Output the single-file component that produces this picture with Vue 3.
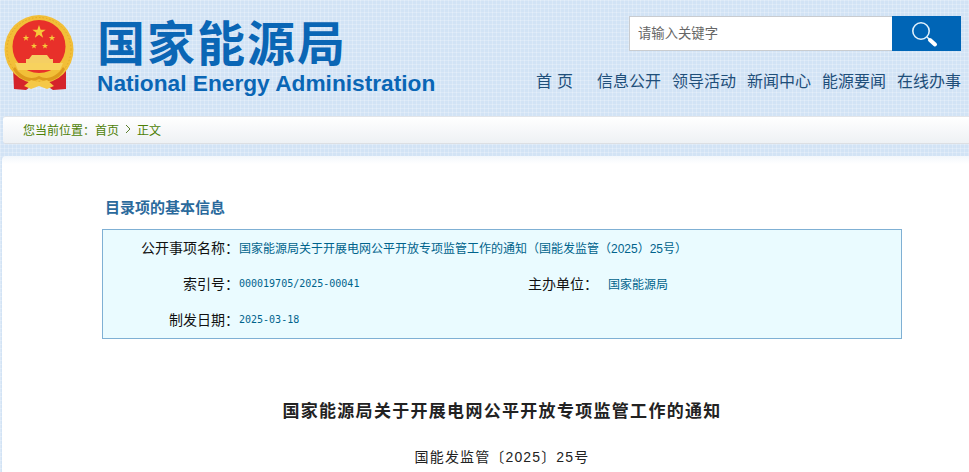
<script setup>
const navItems = ['信息公开', '领导活动', '新闻中心', '能源要闻', '在线办事']
const star = (cx, cy, r) => {
  const pts = []
  for (let i = 0; i < 10; i++) {
    const rad = i % 2 ? r * 0.4 : r
    const a = -Math.PI / 2 + (i * Math.PI) / 5
    pts.push((cx + rad * Math.cos(a)).toFixed(2) + ',' + (cy + rad * Math.sin(a)).toFixed(2))
  }
  return pts.join(' ')
}
const stars = [
  [39, 32, 7],
  [26, 38, 3.4],
  [52, 38, 3.4],
  [34, 46, 3.2],
  [45, 46, 3.2]
]
</script>

<template>
  <div class="page">
    <header class="top">
      <div class="brand">
        <svg class="emblem" width="80" height="96" viewBox="0 0 80 96" aria-hidden="true">
          <path d="M13 68 L14 89 L26 90 L40 80 L28 70 Z" fill="#d5232a" />
          <path d="M66 68 L66 89 L53 90 L38 80 L50 70 Z" fill="#d5232a" />
          <circle cx="39" cy="49.5" r="34.5" fill="#f2bf38" />
          <circle cx="39" cy="49.5" r="32" fill="none" stroke="#e3a826" stroke-width="1" stroke-dasharray="1.5 2" />
          <circle cx="39" cy="46.5" r="26.5" fill="#e8302a" />
          <polygon v-for="(s, i) in stars" :key="i" :points="star(s[0], s[1], s[2])" fill="#f7c93a" />
          <path d="M32 55 H47 L50 59 H53 V63 H26 V59 H29 Z" fill="#f5cf63" />
          <path d="M15 63 H63 L60 70 H18 Z" fill="#f7d25e" />
          <path d="M15 67 C22 78 32 80 39 76 C46 80 56 78 63 67 L65 69 C58 82 46 83 39 79 C32 83 20 82 13 69 Z" fill="#dd9a1d" />
          <path d="M24 86 L31 80 L39 82 L47 80 L54 86 L47 89 L39 86 L31 89 Z" fill="#f5c846" />
        </svg>
        <div class="wordmark">
          <div class="cn">国家能源局</div>
          <div class="en">National Energy Administration</div>
        </div>
      </div>
      <div class="tools">
        <div class="search">
          <div class="field">请输入关键字</div>
          <div class="go">
            <svg width="30" height="30" viewBox="0 0 30 30" aria-hidden="true">
              <circle cx="9" cy="12" r="8.2" fill="none" stroke="#dff0fb" stroke-width="1.6" />
              <path d="M15 18 L18 21" stroke="#dff0fb" stroke-width="1.6" />
              <path d="M18 21 L23 25.5" stroke="#fff" stroke-width="4" stroke-linecap="round" />
            </svg>
          </div>
        </div>
        <nav class="nav">
          <a class="home">首 页</a>
          <a v-for="n in navItems" :key="n">{{ n }}</a>
        </nav>
      </div>
    </header>

    <div class="crumb">
      <span>您当前位置：首页</span>
      <svg class="chev" width="6" height="10" viewBox="0 0 6 10" aria-hidden="true">
        <path d="M1 1 L5 5 L1 9" fill="none" stroke="#5b7f2c" stroke-width="1" />
      </svg>
      <span>正文</span>
    </div>

    <main class="sheet">
      <h2 class="section">目录项的基本信息</h2>
      <div class="info">
        <div class="row">
          <span class="label">公开事项名称：</span>
          <span class="value">国家能源局关于开展电网公平开放专项监管工作的通知（国能发监管（2025）25号）</span>
        </div>
        <div class="row">
          <span class="label">索引号：</span>
          <span class="value mono idx">000019705/2025-00041</span>
          <span class="label second">主办单位：</span>
          <span class="value org">国家能源局</span>
        </div>
        <div class="row">
          <span class="label">制发日期：</span>
          <span class="value mono">2025-03-18</span>
        </div>
      </div>
      <h1 class="title">国家能源局关于开展电网公平开放专项监管工作的通知</h1>
      <p class="docno">国能发监管〔2025〕25号</p>
    </main>
  </div>
</template>

<style>
html, body { margin: 0; background: #d3e4f5; }
</style>

<style scoped>
.page {
  width: 969px;
  height: 472px;
  overflow: hidden;
  font-family: "Liberation Sans", "Noto Sans CJK SC", sans-serif;
  background-color: #d2e3f5;
  background-image:
    linear-gradient(rgba(255, 255, 255, 0.22) 1px, transparent 1px),
    linear-gradient(90deg, rgba(255, 255, 255, 0.22) 1px, transparent 1px);
  background-size: 4px 4px;
}
.top {
  height: 116px;
  display: flex;
  justify-content: space-between;
  box-sizing: border-box;
  padding-right: 8px;
}
.brand { display: flex; }
.emblem { flex: none; margin-right: 17px; }
.wordmark { padding-top: 16px; }
.cn {
  font-size: 48px;
  line-height: 57px;
  letter-spacing: 2px;
  font-weight: 700;
  color: #0a66b5;
}
.en {
  font-size: 22.7px;
  line-height: 20px;
  font-weight: 700;
  color: #0a66b5;
  white-space: nowrap;
}
.tools {
  display: flex;
  flex-direction: column;
  align-items: flex-end;
  padding-top: 16px;
}
.search { display: flex; height: 35px; }
.field {
  width: 263px;
  box-sizing: border-box;
  background: #fff;
  border: 1px solid #c9ccd0;
  border-right: none;
  padding-left: 8px;
  font-size: 13.33px;
  line-height: 33px;
  color: #666;
}
.go {
  width: 69px;
  background: #0065b6;
  display: flex;
  align-items: center;
  justify-content: center;
}
.nav {
  display: flex;
  gap: 11px;
  margin-top: 20px;
  font-size: 16px;
  line-height: 22px;
  color: #1f4f7a;
}
.home { margin-right: 13px; word-spacing: 0.5px; }
.crumb {
  height: 28px;
  margin-left: 3px;
  box-sizing: border-box;
  padding: 0 0 2px 20px;
  display: flex;
  align-items: center;
  gap: 6px;
  font-size: 12px;
  color: #4d7f06;
  background: linear-gradient(#fff, #eef1f4);
  border-top: 1px solid #e2e5e9;
  border-bottom: 1px solid #dcdfe3;
  border-radius: 3px 0 0 3px;
}
.sheet {
  margin: 12px 0 0 2px;
  height: 316px;
  background: linear-gradient(#f3f7fb, #fff 8px);
  border-radius: 4px 0 0 0;
  box-sizing: border-box;
  padding-top: 43px;
}
.section {
  margin: 0 0 12px 103px;
  font-size: 15px;
  line-height: 18px;
  font-weight: 700;
  color: #2b6a9c;
}
.info {
  width: 800px;
  height: 110px;
  margin-left: 100px;
  box-sizing: border-box;
  border: 1px solid #7fb0d4;
  background: #eafbff;
}
.row {
  height: 36px;
  box-sizing: border-box;
  padding-bottom: 2px;
  display: flex;
  align-items: center;
}
.label {
  width: 136px;
  flex: none;
  text-align: right;
  font-size: 14px;
  color: #111;
}
.value {
  font-size: 12px;
  color: #00638c;
  white-space: nowrap;
}
.mono { font-family: "DejaVu Sans Mono", monospace; font-size: 10px; }
.idx { width: 233px; flex: none; }
.label.second { width: 126px; }
.org { margin-left: 10px; }
.title {
  margin: 63px 0 0;
  padding-left: 33px;
  text-align: center;
  font-size: 17px;
  line-height: 20px;
  font-weight: 700;
  letter-spacing: 1.3px;
  color: #222;
}
.docno {
  margin: 26px 0 0;
  padding-left: 33px;
  text-align: center;
  font-size: 14px;
  line-height: 18px;
  letter-spacing: 1.15px;
  color: #222;
}
</style>
